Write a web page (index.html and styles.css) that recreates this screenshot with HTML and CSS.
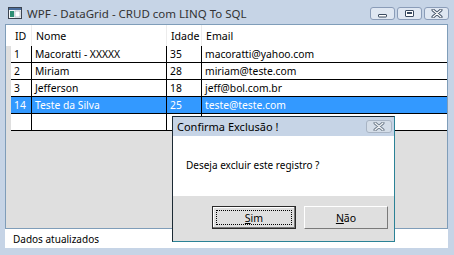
FILE: index.html
```html
<!DOCTYPE html>
<html lang="pt">
<head>
  <meta charset="UTF-8">
  <title>WPF - DataGrid - CRUD com LINQ To SQL</title>
  <link rel="stylesheet" href="styles.css">
</head>
<body>
  <div class="window">
    <div class="titlebar">
      <svg class="app-icon" width="14" height="12" viewBox="0 0 14 12">
        <rect x="0.5" y="0.5" width="13" height="11" fill="#f4f6f8" stroke="#3c4450"/>
        <rect x="1" y="1" width="12" height="2" fill="#4a6c9c"/>
        <rect x="2" y="4" width="4" height="6" fill="#2f8f74"/>
        <rect x="7" y="4" width="5" height="6" fill="#ffffff" stroke="#8090a0" stroke-width="0.5"/>
      </svg>
      <span class="title">WPF - DataGrid - CRUD com LINQ To SQL</span>
      <div class="caption-buttons">
        <div class="cap-btn">
          <svg width="11" height="8" viewBox="0 0 11 8"><rect x="1.5" y="4.5" width="8" height="2.5" rx="0.5" fill="#fff" stroke="#3a4a60"/></svg>
        </div>
        <div class="cap-btn">
          <svg width="11" height="9" viewBox="0 0 11 9"><rect x="1.5" y="1.5" width="8" height="6" rx="0.5" fill="#fff" stroke="#3a4a60"/><rect x="3" y="3" width="5" height="2" fill="#3a4a60"/></svg>
        </div>
        <div class="cap-btn">
          <svg width="12" height="9" viewBox="0 0 12 9"><path d="M2 1 L10 8 M10 1 L2 8" stroke="#3a4a60" stroke-width="3" stroke-linecap="round"/><path d="M2 1 L10 8 M10 1 L2 8" stroke="#fff" stroke-width="1.2" stroke-linecap="round"/></svg>
        </div>
      </div>
    </div>

    <div class="client">
      <div class="datagrid">
        <div class="dg-header">
          <span class="hcell">ID</span>
          <span class="hcell">Nome</span>
          <span class="hcell">Idade</span>
          <span class="hcell">Email</span>
        </div>
        <div class="dg-row">
          <span class="cell">1</span>
          <span class="cell">Macoratti - XXXXX</span>
          <span class="cell">35</span>
          <span class="cell">macoratti@yahoo.com</span>
        </div>
        <div class="dg-row">
          <span class="cell">2</span>
          <span class="cell">Miriam</span>
          <span class="cell">28</span>
          <span class="cell">miriam@teste.com</span>
        </div>
        <div class="dg-row">
          <span class="cell">3</span>
          <span class="cell">Jefferson</span>
          <span class="cell">18</span>
          <span class="cell">jeff@bol.com.br</span>
        </div>
        <div class="dg-row selected">
          <span class="cell">14</span>
          <span class="cell">Teste da Silva</span>
          <span class="cell">25</span>
          <span class="cell">teste@teste.com</span>
        </div>
        <div class="dg-row">
          <span class="cell"></span>
          <span class="cell"></span>
          <span class="cell"></span>
          <span class="cell"></span>
        </div>
      </div>
      <div class="statusbar">Dados atualizados</div>
    </div>

    <div class="dialog">
      <div class="dialog-title">
        <span>Confirma Exclusão !</span>
        <div class="dialog-close">
          <svg width="12" height="9" viewBox="0 0 12 9"><path d="M2 1 L10 8 M10 1 L2 8" stroke="#6a7888" stroke-width="3" stroke-linecap="round"/><path d="M2 1 L10 8 M10 1 L2 8" stroke="#f4f6f8" stroke-width="1.2" stroke-linecap="round"/></svg>
        </div>
      </div>
      <div class="dialog-body">Deseja excluir este registro ?</div>
      <div class="dialog-footer">
        <div class="btn default"><span class="focus"><u>S</u>im</span></div>
        <div class="btn"><span><u>N</u>ão</span></div>
      </div>
    </div>
  </div>
</body>
</html>
```

FILE: styles.css
```css
body { margin: 0; background: #c6d4e6; font-family: "Noto Sans", "Liberation Sans", sans-serif; font-size: 11px; color: #000; }
.window { position: relative; width: 454px; height: 255px; background: #c6d4e6; }

.titlebar { height: 24px; display: flex; align-items: center; }
.app-icon { margin-left: 8px; margin-top: 2px; }
.title { margin-left: 5px; margin-top: 3px; color: #333; font-size: 11.5px; }
.caption-buttons { margin-left: auto; margin-right: 5px; margin-top: 3px; display: flex; gap: 2px; }
.cap-btn { width: 25px; height: 13px; border: 1px solid #8a9cb8; border-radius: 3px; background: #dfe7f2; display: flex; align-items: center; justify-content: center; box-sizing: border-box; }

.client { margin: 0 6px 0 5px; height: 224px; display: flex; flex-direction: column; }
.datagrid { height: 205px; box-sizing: border-box; border: 1px solid #7f9db9; background: #dfdfdf; font-size: 10.3px; }
.dg-header { height: 21px; background: #fff; display: grid; grid-template-columns: 5px 21px 135px 35px 1fr; align-items: center; }
.dg-header::before { content: ""; }
.hcell { padding-left: 4px; border-right: 1px solid #ececec; height: 100%; display: flex; align-items: center; box-sizing: border-box; font-size: 10.6px; }
.hcell:last-child { border-right: none; }

.dg-row { height: 17px; margin-left: 5px; background: #fff; display: grid; grid-template-columns: 21px 135px 35px 1fr; border-bottom: 1px solid #000; box-sizing: border-box; }
.cell { padding-left: 3px; border-right: 1px solid #000; display: flex; align-items: center; white-space: nowrap; }
.cell:last-child { border-right: none; }
.dg-row.selected { background: #3399ff; color: #fff; }

.statusbar { height: 19px; background: #fff; padding-left: 8px; display: flex; align-items: center; font-size: 10px; }

.dialog { position: absolute; left: 172px; top: 116px; width: 223px; height: 126px; box-sizing: border-box; border: 1px solid #1c2a34; border-right-color: #2a8296; border-bottom-color: #2a8296; display: flex; flex-direction: column; background: #fff; }
.dialog-title { height: 19px; background: #c6d4e6; display: flex; align-items: center; padding-left: 4px; }
.dialog-close { margin-left: auto; margin-right: 2px; width: 26px; height: 13px; border: 1px solid #a8b4c4; border-radius: 3px; background: #d4dde8; display: flex; align-items: center; justify-content: center; box-sizing: border-box; }
.dialog-body { height: 60px; padding-left: 13px; padding-bottom: 3px; box-sizing: border-box; display: flex; align-items: center; font-size: 10px; }
.dialog-footer { flex: 1; background: #dfdfdf; display: flex; gap: 8px; padding: 10px 0 0 39px; font-size: 10.5px; }
.btn { width: 84px; height: 23px; box-sizing: border-box; border: 1px solid #fff; border-right-color: #7a7a7a; border-bottom-color: #7a7a7a; display: flex; align-items: center; justify-content: center; }
.btn.default { border: 1px solid #2a2a2a; box-shadow: inset -1px -1px 0 #7a7a7a, inset 1px 1px 0 #fff; padding: 3px; }
.focus { flex: 1; align-self: stretch; border: 1px dotted #000; display: flex; align-items: center; justify-content: center; }
```
